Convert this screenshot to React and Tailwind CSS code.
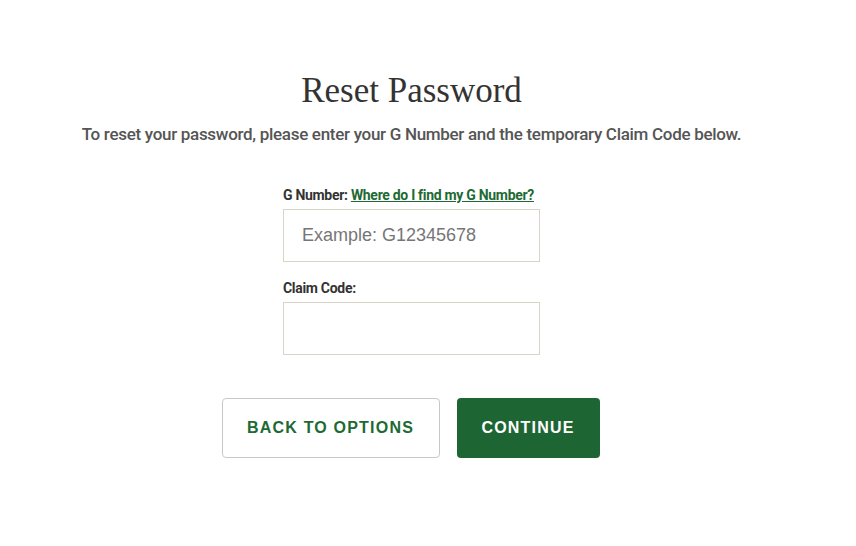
export default function App() {
  return (
    <div className="min-h-[546px] bg-white">
      <div className="w-[823px] pt-[71px] flex flex-col items-center">
        <h1
          className="text-[35px] leading-[40px] text-[#333333]"
          style={{ fontFamily: '"Liberation Serif", serif' }}
        >
          Reset Password
        </h1>
        <p
          className="mt-[11px] text-[17px] leading-[24px] font-medium tracking-[-0.3px] text-[#555555]"
          style={{ fontFamily: 'Roboto, sans-serif' }}
        >
          To reset your password, please enter your G Number and the temporary Claim Code below.
        </p>

        <form className="mt-[41px] w-[257px]" style={{ fontFamily: 'Roboto, sans-serif' }}>
          <label className="block text-[14px] leading-[16px] font-bold tracking-[-0.3px] text-[#333333] whitespace-nowrap">
            G Number:{' '}
            <a href="#" className="text-[#1d6a33] underline">
              Where do I find my G Number?
            </a>
          </label>
          <input
            className="mt-[6px] block w-[257px] h-[53px] border border-[#d8d5c7] px-[18px] text-[18px] text-[#333] placeholder:text-[#767676] outline-none"
            style={{ fontFamily: '"Liberation Sans", Arial, sans-serif' }}
            placeholder="Example: G12345678"
          />
          <label className="mt-[18px] block text-[14px] leading-[16px] font-bold tracking-[-0.3px] text-[#333333]">
            Claim Code:
          </label>
          <input
            className="mt-[6px] block w-[257px] h-[53px] border border-[#d8d5c7] px-[18px] text-[18px] outline-none"
            style={{ fontFamily: '"Liberation Sans", Arial, sans-serif' }}
          />
        </form>

        <div
          className="mt-[43px] flex gap-[17px] -translate-x-[1px]"
          style={{ fontFamily: '"Liberation Sans", Arial, sans-serif' }}
        >
          <button className="w-[218px] h-[60px] rounded-[4px] border border-[#c8c8c8] bg-white text-[16px] font-bold tracking-[1.2px] text-[#1d6a33]">
            BACK TO OPTIONS
          </button>
          <button className="w-[143px] h-[60px] rounded-[4px] bg-[#1d6633] text-[16px] font-bold tracking-[1.2px] text-white">
            CONTINUE
          </button>
        </div>
      </div>
    </div>
  );
}
